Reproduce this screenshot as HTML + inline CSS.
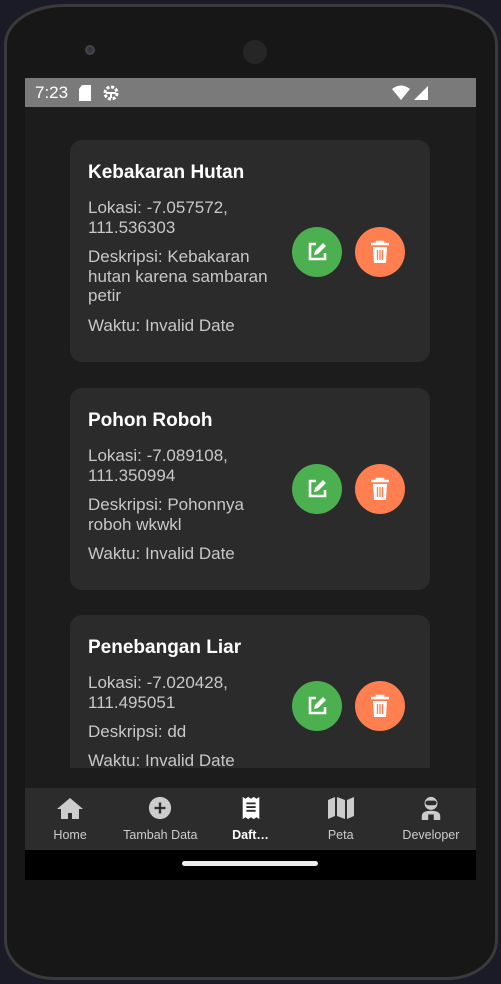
<!DOCTYPE html>
<html><head><style>
*{margin:0;padding:0;box-sizing:border-box}
body{width:501px;height:984px;background:#1a1b26;position:relative;overflow:hidden;font-family:"Liberation Sans",sans-serif}
.phone{position:absolute;left:4px;top:4px;width:494px;height:976px;border-radius:60px 60px 50px 50px / 40px 40px 40px 40px;background:#171717;border:3px solid #3a3a3a}
.screen{position:absolute;left:25px;top:78px;width:451px;height:802px;background:#1c1c1c;overflow:hidden}
.status{height:29px;background:#7a7a7a;color:#fff;font-size:17px;display:flex;align-items:center;padding-left:10px}
.content{position:absolute;top:29px;left:0;width:451px;height:661px;overflow:hidden}
.card{position:absolute;left:45px;width:360px;background:#2b2b2b;border-radius:12px;padding:0 18px}
.t{color:#fff;font-weight:bold;font-size:19px;position:absolute;left:18px}
.p{color:#c8c8c8;font-size:17px;line-height:19.5px;position:absolute;left:18px;width:196px}
.btn{position:absolute;width:50px;height:50px;border-radius:50%;display:flex;align-items:center;justify-content:center}
.g{background:#4caf50}.o{background:#ff7f50}
.nav{position:absolute;top:710px;left:0;width:451px;height:62px;background:#2c2c2c;display:flex}
.nav div{flex:1;text-align:center;color:#ccc;font-size:12.5px;padding-top:8px;white-space:nowrap}
.nav svg{display:block;margin:0 auto 8px}
.home{position:absolute;top:772px;left:0;width:451px;height:30px;background:#000}
.home i{position:absolute;left:157px;top:11px;width:136px;height:5px;border-radius:3px;background:#eee}
</style></head><body>
<div class="phone">
<div style="position:absolute;left:78px;top:38px;width:10px;height:10px;border-radius:50%;background:#334;border:2px solid #444"></div>
<div style="position:absolute;left:236px;top:33px;width:24px;height:24px;border-radius:50%;background:#262626"></div>
</div>
<div class="screen">
<div class="status">7:23
<svg width="14" height="16" style="margin-left:10px" viewBox="0 0 14 16"><path d="M4 0h9v16H1V4z" fill="#fff"/></svg>
<svg width="18" height="18" style="margin-left:10px" viewBox="0 0 18 18"><circle cx="9" cy="9" r="6" fill="none" stroke="#fff" stroke-width="3" stroke-dasharray="3 1.7"/><path d="M4 9h10M9 9v5" stroke="#fff" stroke-width="2"/></svg>
<svg width="40" height="16" style="margin-left:auto;margin-right:44px" viewBox="0 0 40 16"><path d="M0 4Q9-3 18 4L9 15z" fill="#fff"/><path d="M36 1v14H22z" fill="#fff"/></svg>
</div>
<div class="content">
<div class="card" style="top:33px;height:222px">
<div class="t" style="top:22px">Kebakaran Hutan</div>
<div class="p" style="top:58px">Lokasi: -7.057572, 111.536303</div>
<div class="p" style="top:107px">Deskripsi: Kebakaran hutan karena sambaran petir</div>
<div class="p" style="top:176px">Waktu: Invalid Date</div>
<div class="btn g" style="left:222px;top:87px"><svg width="24" height="24" viewBox="0 0 24 24"><path d="M11 4H5v15h15v-6" fill="none" stroke="#fff" stroke-width="2.6"/><path d="M9 15l1-4 8-8 3 3-8 8z" fill="#fff"/></svg></div>
<div class="btn o" style="left:285px;top:87px"><svg width="22" height="24" viewBox="0 0 22 24"><path d="M2 4h18M8 4V2h6v2" stroke="#fff" stroke-width="2.5" fill="none"/><path d="M4 7h14l-1 16H5z" fill="#fff"/><path d="M8.5 10v10M11 10v10M13.5 10v10" stroke="#ff7f50" stroke-width="1.3"/></svg></div>
</div>
<div class="card" style="top:281px;height:202px">
<div class="t" style="top:22px">Pohon Roboh</div>
<div class="p" style="top:58px">Lokasi: -7.089108, 111.350994</div>
<div class="p" style="top:107px">Deskripsi: Pohonnya roboh wkwkl</div>
<div class="p" style="top:156px">Waktu: Invalid Date</div>
<div class="btn g" style="left:222px;top:76px"><svg width="24" height="24" viewBox="0 0 24 24"><path d="M11 4H5v15h15v-6" fill="none" stroke="#fff" stroke-width="2.6"/><path d="M9 15l1-4 8-8 3 3-8 8z" fill="#fff"/></svg></div>
<div class="btn o" style="left:285px;top:76px"><svg width="22" height="24" viewBox="0 0 22 24"><path d="M2 4h18M8 4V2h6v2" stroke="#fff" stroke-width="2.5" fill="none"/><path d="M4 7h14l-1 16H5z" fill="#fff"/><path d="M8.5 10v10M11 10v10M13.5 10v10" stroke="#ff7f50" stroke-width="1.3"/></svg></div>
</div>
<div class="card" style="top:508px;height:202px">
<div class="t" style="top:22px">Penebangan Liar</div>
<div class="p" style="top:58px">Lokasi: -7.020428, 111.495051</div>
<div class="p" style="top:107px">Deskripsi: dd</div>
<div class="p" style="top:136px">Waktu: Invalid Date</div>
<div class="btn g" style="left:222px;top:66px"><svg width="24" height="24" viewBox="0 0 24 24"><path d="M11 4H5v15h15v-6" fill="none" stroke="#fff" stroke-width="2.6"/><path d="M9 15l1-4 8-8 3 3-8 8z" fill="#fff"/></svg></div>
<div class="btn o" style="left:285px;top:66px"><svg width="22" height="24" viewBox="0 0 22 24"><path d="M2 4h18M8 4V2h6v2" stroke="#fff" stroke-width="2.5" fill="none"/><path d="M4 7h14l-1 16H5z" fill="#fff"/><path d="M8.5 10v10M11 10v10M13.5 10v10" stroke="#ff7f50" stroke-width="1.3"/></svg></div>
</div>
</div>
<div class="nav">
<div><svg width="28" height="24" viewBox="0 0 28 24"><path d="M14 2L1 13h4v10h7v-6h4v6h7V13h4z" fill="#ccc"/></svg>Home</div>
<div><svg width="26" height="24" viewBox="0 0 26 26"><circle cx="13" cy="13" r="12" fill="#ccc"/><path d="M13 7v12M7 13h12" stroke="#2c2c2c" stroke-width="2.5"/></svg>Tambah Data</div>
<div style="color:#fff;font-weight:bold"><svg width="20" height="24" viewBox="0 0 20 26"><path d="M1 1l3 2 3-2 3 2 3-2 3 2 3-2v24l-3-2-3 2-3-2-3 2-3-2-3 2z" fill="#fff"/><path d="M5 8h10M5 12h10M5 16h10" stroke="#2c2c2c" stroke-width="2"/></svg>Daft…</div>
<div><svg width="28" height="24" viewBox="0 0 28 24"><path d="M1 4l7-3v19l-7 3zM10 1l8 3v19l-8-3zM20 4l7-3v19l-7 3z" fill="#ccc"/></svg>Peta</div>
<div><svg width="24" height="24" viewBox="0 0 24 26"><circle cx="12" cy="8" r="7" fill="#ccc"/><rect x="6" y="5" width="12" height="5" rx="2.5" fill="#2c2c2c"/><path d="M2 26v-4q0-6 10-6t10 6v4z" fill="#ccc"/><rect x="9" y="20" width="6" height="6" fill="#2c2c2c"/></svg>Developer</div>
</div>
<div class="home"><i></i></div>
</div>
</body></html>
